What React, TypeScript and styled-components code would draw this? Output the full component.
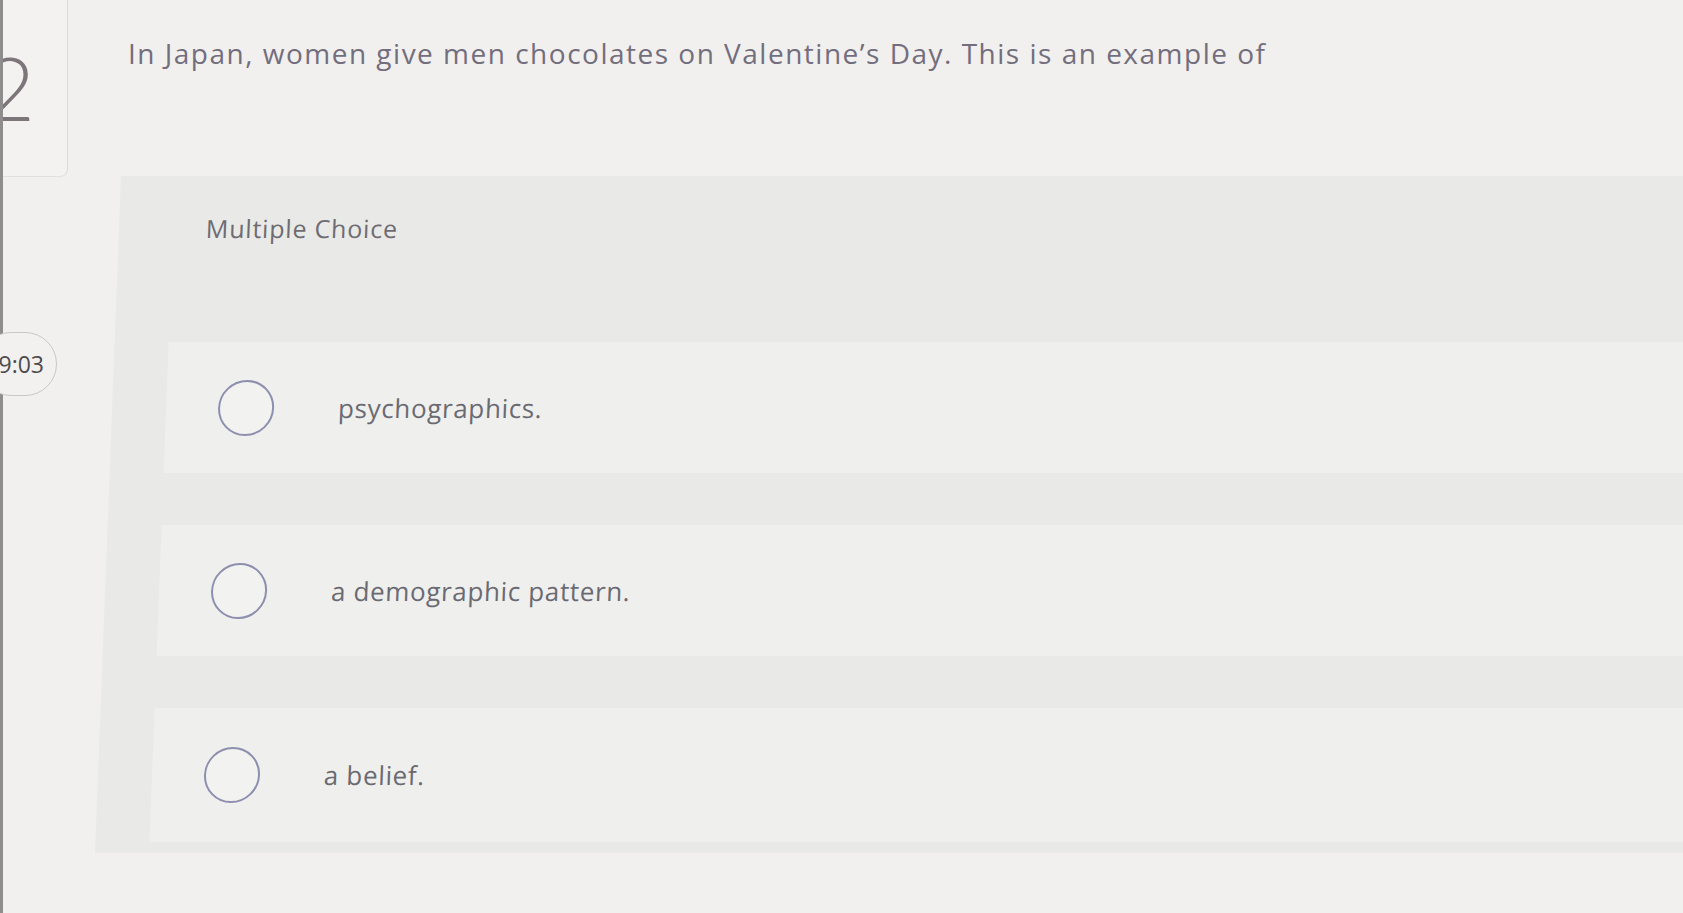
import React from "react";
import styled, { createGlobalStyle } from "styled-components";

const GlobalStyle = createGlobalStyle`
  html, body {
    margin: 0;
    padding: 0;
    background: #f1f0ee;
  }
  body {
    font-family: "Open Sans", Lato, sans-serif;
  }
`;

const Page = styled.div`
  display: flex;
  width: 1683px;
  height: 913px;
  overflow: hidden;
  background: #f1f0ee;
`;

const Rail = styled.div`
  width: 118px;
  flex-shrink: 0;
  display: flex;
  flex-direction: column;
  border-left: 3px solid #8e8c8d;
`;

const NumberCard = styled.div`
  width: 64px;
  height: 176px;
  overflow: hidden;
  border-right: 1.5px solid #dcdad7;
  border-bottom: 1.5px solid #e2e0dd;
  border-bottom-right-radius: 8px;
  background: #f3f2f0;
`;

const QuestionNumber = styled.div`
  margin: 43px 0 0 -19px;
  font-family: Lato, sans-serif;
  font-size: 88px;
  line-height: 1;
  font-weight: 300;
  color: #7d7579;
`;

const Timer = styled.div`
  margin: 155px 0 0 -24px;
  width: 78px;
  height: 64px;
  box-sizing: border-box;
  display: flex;
  align-items: center;
  justify-content: flex-end;
  padding-right: 12px;
  border: 1.5px solid #cac8c6;
  border-radius: 33px;
  background: #f2f1ef;
  font-size: 23px;
  color: #4d4c4e;
`;

const Main = styled.div`
  flex: 1;
  display: flex;
  flex-direction: column;
  margin-right: -60px;
`;

const Question = styled.div`
  height: 177px;
  box-sizing: border-box;
  padding: 34px 0 0 7px;
  font-size: 28px;
  letter-spacing: 1.5px;
  color: #736e7d;
  white-space: nowrap;
`;

const ChoicePanel = styled.div`
  flex: 1;
  display: flex;
  flex-direction: column;
  background: #e9e9e7;
  transform: skewX(-2.2deg);
  transform-origin: top left;
  padding: 35px 0 11px 0;
  margin-bottom: 60px;
`;

const Label = styled.div`
  padding-left: 87px;
  font-size: 25px;
  letter-spacing: 0.8px;
  color: #6e6c72;
  height: 131px;
`;

const Options = styled.div`
  display: flex;
  flex-direction: column;
  gap: 52px;
  padding-left: 54px;
`;

const OptionRow = styled.div<{ tall?: boolean }>`
  height: ${(p) => (p.tall ? 134 : 131)}px;
  display: flex;
  align-items: center;
  background: #efefed;
`;

const Radio = styled.span`
  width: 52px;
  height: 52px;
  margin-left: 52px;
  flex-shrink: 0;
  border: 2px solid #8d8fae;
  border-radius: 50%;
  background: #f2f2f0;
`;

const OptionText = styled.span`
  margin-left: 64px;
  font-size: 26px;
  letter-spacing: 0.65px;
  color: #6a6a72;
`;

const options = ["psychographics.", "a demographic pattern.", "a belief."];

export default function App() {
  return (
    <>
      <GlobalStyle />
      <Page>
        <Rail>
          <NumberCard>
            <QuestionNumber>2</QuestionNumber>
          </NumberCard>
          <Timer>9:03</Timer>
        </Rail>
        <Main>
          <Question>
            In Japan, women give men chocolates on Valentine’s Day. This is an
            example of
          </Question>
          <ChoicePanel>
            <Label>Multiple Choice</Label>
            <Options>
              {options.map((text, i) => (
                <OptionRow key={text} tall={i === options.length - 1}>
                  <Radio />
                  <OptionText>{text}</OptionText>
                </OptionRow>
              ))}
            </Options>
          </ChoicePanel>
        </Main>
      </Page>
    </>
  );
}
